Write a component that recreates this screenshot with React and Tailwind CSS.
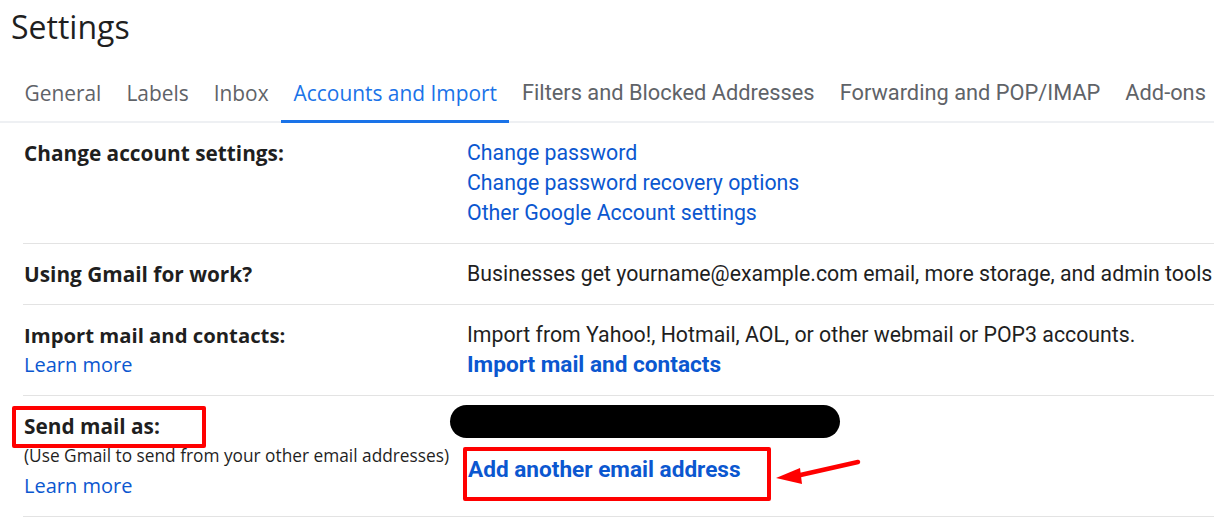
import React from "react";

const tabs = [
  { label: "General", font: "sans" },
  { label: "Labels", font: "sans" },
  { label: "Inbox", font: "sans" },
  { label: "Accounts and Import", font: "sans", active: true },
  { label: "Filters and Blocked Addresses", font: "roboto" },
  { label: "Forwarding and POP/IMAP", font: "roboto" },
  { label: "Add-ons", font: "roboto" },
];

export default function App() {
  return (
    <div className="w-[1214px] h-[522px] overflow-hidden bg-white text-[#1f1f1f] font-['Open_Sans',sans-serif]">
      <div className="h-[60px] pl-[11px] pt-[5px] text-[32px] leading-[44px] text-[#1f1f1f]">Settings</div>
      <div className="flex pl-[12px] border-b-2 border-[#eef0f3] whitespace-nowrap">
        {tabs.map((t) => (
          <div
            key={t.label}
            className={
              "px-[12.5px] pt-[18px] pb-[12px] -mb-[2px] border-b-[3px] leading-[30px] " +
              (t.font === "roboto" ? "font-['Roboto',sans-serif] text-[21.8px] " : "text-[20.9px] ") +
              (t.active ? "border-[#1a73e8] text-[#1a73e8]" : "border-transparent text-[#5f6368]")
            }
          >
            {t.label}
          </div>
        ))}
      </div>

      <div className="ml-[23px]">
        <Row
          left={<div className="font-bold text-[20.8px]">Change account settings:</div>}
          right={
            <div className="text-[#0b57d0]">
              <div>Change password</div>
              <div>Change password recovery options</div>
              <div>Other Google Account settings</div>
            </div>
          }
        />
        <Row
          left={<div className="font-bold text-[20.8px]">Using Gmail for work?</div>}
          right={<div className="whitespace-nowrap">Businesses get yourname@example.com email, more storage, and admin tools</div>}
        />
        <Row
          left={
            <div>
              <div className="font-bold text-[20.3px]">Import mail and contacts:</div>
              <div className="text-[#0b57d0]">Learn more</div>
            </div>
          }
          right={
            <div>
              <div>Import from Yahoo!, Hotmail, AOL, or other webmail or POP3 accounts.</div>
              <div className="font-bold text-[22.6px] text-[#0b57d0]">Import mail and contacts</div>
            </div>
          }
        />
        <div className="relative flex border-b border-[#e3e3e3] py-[15px] text-[20px] leading-[30px]">
          <div className="w-[444px] shrink-0 pl-[1px]">
            <div className="relative font-bold text-[20.8px]">
              Send mail as:
              <div className="absolute left-[-12px] top-[-5px] w-[194px] h-[42px] border-4 border-[#ff0000] rounded-[2px]" />
            </div>
            <div className="text-[17.3px] whitespace-nowrap">(Use Gmail to send from your other email addresses)</div>
            <div className="text-[#0b57d0]">Learn more</div>
          </div>
          <div className="font-['Roboto',sans-serif]">
            <div className="-mt-[6px] -ml-[17px] w-[390px] h-[33px] rounded-full bg-black" />
            <div className="mt-[9px] -ml-[4px] w-[308px] h-[54px] border-4 border-[#ff0000] rounded-[2px] pt-[4px]">
              <div className="font-bold text-[22.6px] text-[#0b57d0] pl-[1px] whitespace-nowrap">Add another email address</div>
            </div>
          </div>
          <svg className="absolute left-[737px] top-[50px]" width="110" height="50" viewBox="0 0 110 50">
            <line x1="98" y1="16" x2="36" y2="30" stroke="#ff0000" strokeWidth="4.5" strokeLinecap="round" />
            <polygon points="16,32 40,22 42,38" fill="#ff0000" />
          </svg>
        </div>
      </div>
    </div>
  );
}

function Row({ left, right }) {
  return (
    <div className="flex border-b border-[#e3e3e3] py-[15px] text-[20px] leading-[30px]">
      <div className="w-[444px] shrink-0 pl-[1px]">{left}</div>
      <div className="font-['Roboto',sans-serif] text-[21.3px] text-[#1f1f1f]">{right}</div>
    </div>
  );
}
